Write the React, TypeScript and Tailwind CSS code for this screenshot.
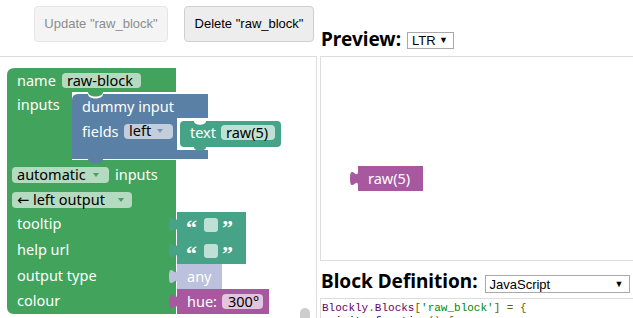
const GREEN = '#41a35c'
const GREEN_FIELD = '#b4dbbf'
const BLUE = '#5b80a5'
const BLUE_FIELD = '#c2cedb'
const TEAL = '#47a387'
const TEAL_FIELD = '#bfe0d4'
const LAVENDER = '#bcc1dd'
const PURPLE = '#a8589f'
const PURPLE_FIELD = '#e4c5df'

// output block with the puzzle tab on its left edge
function valuePath(x: number, y: number, w: number, h: number) {
  return `M ${x},${y} H ${x + w} V ${y + h} H ${x} V ${y + 20} c 0,-10 -8,8 -8,-7.5 s 8,2.5 8,-7.5 Z`
}

function Arrow({ x, y, fill }: { x: number; y: number; fill: string }) {
  return <polygon points={`${x - 3},${y - 2} ${x + 3},${y - 2} ${x},${y + 2}`} fill={fill} />
}

function Quote({ y }: { y: number }) {
  return (
    <g fontFamily="'Liberation Serif', serif" fontSize={22} fontWeight={700} fill="#fff">
      <path d={valuePath(177, y, 69, 26)} fill={TEAL} />
      <text x={186} y={y + 23}>“</text>
      <rect x={204} y={y + 6} width={14} height={14} rx={3} fill={TEAL_FIELD} />
      <text x={222} y={y + 23}>”</text>
    </g>
  )
}

function Workspace() {
  return (
    <svg
      width={316}
      height={261}
      viewBox="0 57 316 261"
      className="block font-['Noto_Sans',sans-serif]"
      fontSize={14.5}
    >
      {/* factory base block */}
      <path
        d="M 15,68 H 176 V 92 H 103 c 0,6 -15,6 -15,0 H 72 V 160 H 176 V 314 H 14 Q 7,314 7,307 V 75 Q 7,68 15,68 Z"
        fill={GREEN}
      />
      <text x={17} y={86} fill="#fff">name</text>
      <rect x={62} y={73} width={79} height={15} rx={4} fill={GREEN_FIELD} />
      <text x={67} y={86} fill="#000">raw-block</text>
      <text x={17} y={110} fill="#fff">inputs</text>

      {/* dummy input block */}
      <path
        d="M 72,100 Q 72,94 78,94 H 88 c 0,6 15,6 15,0 H 208 V 118 H 177 V 150 H 208 V 159 H 103 c 0,6 -15,6 -15,0 H 72 Z"
        fill={BLUE}
      />
      <text x={82} y={112} fill="#fff">dummy input</text>
      <text x={82} y={137} fill="#fff">fields</text>
      <rect x={124} y={124} width={49} height={15} rx={4} fill={BLUE_FIELD} />
      <text x={129} y={136} fill="#000">left</text>
      <Arrow x={160} y={131} fill="#7f95ad" />

      {/* text field block */}
      <path
        d="M 180,125 Q 180,121 184,121 H 194 c 0,5 12,5 12,0 H 277 Q 281,121 281,125 V 143 Q 281,147 277,147 H 206 c 0,5 -12,5 -12,0 H 184 Q 180,147 180,143 Z"
        fill={TEAL}
      />
      <text x={190} y={138} fill="#fff">text</text>
      <rect x={221} y={125} width={54} height={15} rx={4} fill={TEAL_FIELD} />
      <text x={226} y={138} fill="#000">raw(5)</text>

      {/* lower rows */}
      <rect x={12} y={167} width={97} height={16} rx={4} fill={GREEN_FIELD} />
      <text x={17} y={180} fill="#000">automatic</text>
      <Arrow x={96} y={175} fill="#4e9a66" />
      <text x={115} y={180} fill="#fff">inputs</text>

      <rect x={12} y={192} width={120} height={16} rx={4} fill={GREEN_FIELD} />
      <text x={17} y={205} fill="#000">
        <tspan fontFamily="'DejaVu Sans', sans-serif">←</tspan> left output
      </text>
      <Arrow x={121} y={200} fill="#4e9a66" />

      <text x={17} y={229} fill="#fff">tooltip</text>
      <text x={17} y={255} fill="#fff">help url</text>
      <text x={17} y={281} fill="#fff">output type</text>
      <text x={17} y={306} fill="#fff">colour</text>

      <Quote y={212} />
      <Quote y={238} />

      <path d={valuePath(177, 264, 45, 25)} fill={LAVENDER} />
      <text x={187} y={282} fill="#fff">any</text>

      <path d={valuePath(177, 289, 92, 25)} fill={PURPLE} />
      <text x={187} y={307} fill="#fff">hue:</text>
      <rect x={222} y={294} width={41} height={15} rx={4} fill={PURPLE_FIELD} />
      <text x={228} y={307} fill="#000">300°</text>

      {/* scrollbar handle */}
      <rect x={300} y={308} width={10} height={20} rx={5} fill="#cdcdcd" />
    </svg>
  )
}

function Preview() {
  return (
    <svg
      width={312}
      height={203}
      viewBox="321 57 312 203"
      className="block font-['Noto_Sans',sans-serif]"
      fontSize={14.5}
    >
      <path d={valuePath(358, 166, 65, 25)} fill={PURPLE} />
      <text x={368} y={184} fill="#fff">raw(5)</text>
    </svg>
  )
}

function FakeSelect({ label, className }: { label: string; className: string }) {
  return (
    <div
      className={`flex items-center justify-between border border-[#a9a9a9] bg-white pl-1 pr-[5px] text-[13px] leading-none text-black ${className}`}
    >
      <span>{label}</span>
      <span className="text-[9px]">▼</span>
    </div>
  )
}

export default function App() {
  return (
    <div className="flex h-[318px] w-[633px] overflow-hidden bg-white font-['Liberation_Sans',Arial,sans-serif]">
      {/* left column: actions + block editor */}
      <div className="flex w-[317px] shrink-0 flex-col">
        <div className="flex h-[56px] shrink-0 items-start gap-4 pl-[34px] pt-[6px] text-[13px]">
          <button className="h-[36px] w-[134px] rounded border border-[#e6e6e6] bg-[#f4f4f4] text-[#8c8c8c]">
            Update "raw_block"
          </button>
          <button className="h-[36px] w-[130px] rounded border border-[#cfcfcf] bg-[#ededed] text-black">
            Delete "raw_block"
          </button>
        </div>
        <div className="min-h-0 flex-1 overflow-hidden border-t border-r border-[#dddddd]">
          <Workspace />
        </div>
      </div>

      {/* right column: preview + definition */}
      <div className="flex w-[320px] shrink-0 flex-col pl-[3px]">
        <div className="flex h-[56px] shrink-0 items-start gap-[6px] pt-[27px] pl-px">
          <h3 className="font-['Noto_Sans',sans-serif] text-[19px] font-bold leading-[24px] text-black">
            Preview:
          </h3>
          <FakeSelect label="LTR" className="mt-[5px] h-[17px] w-[47px]" />
        </div>
        <div className="h-[205px] w-[316px] shrink-0 border border-[#dddddd]">
          <Preview />
        </div>
        <div className="flex h-[37px] shrink-0 items-start gap-[7px] pt-[8px] pl-px">
          <h3 className="font-['Noto_Sans',sans-serif] text-[19px] font-bold leading-[24px] text-black">
            Block Definition:
          </h3>
          <FakeSelect label="JavaScript" className="mt-[6px] h-[18px] w-[145px]" />
        </div>
        <pre className="min-h-0 flex-1 overflow-hidden border-t border-l border-[#dddddd] pt-[3px] pl-px font-['Liberation_Mono',monospace] text-[11px] leading-[13px]">
          <span className="text-[#606]">Blockly</span>
          <span className="text-[#660]">.</span>
          <span className="text-[#606]">Blocks</span>
          <span className="text-[#660]">[</span>
          <span className="text-[#080]">'raw_block'</span>
          <span className="text-[#660]">] = {'{'}</span>
          {'\n  '}
          <span className="text-black">init</span>
          <span className="text-[#660]">: </span>
          <span className="text-[#008]">function</span>
          <span className="text-[#660]">() {'{'}</span>
        </pre>
      </div>
    </div>
  )
}
